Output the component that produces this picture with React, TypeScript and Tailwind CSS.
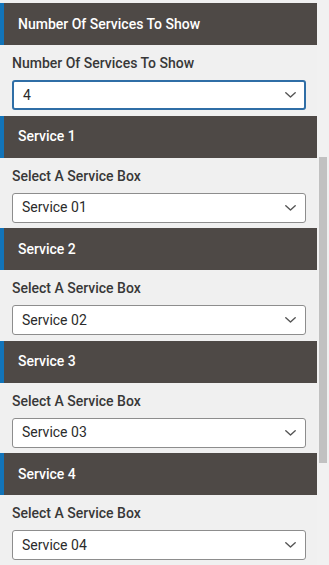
import React from 'react';

const Chevron = () => (
  <svg width="11" height="6" viewBox="0 0 11 6" fill="none" className="shrink-0">
    <path d="M0.8 0.8 L5.5 5 L10.2 0.8" stroke="#555" strokeWidth="1.4" strokeLinecap="round" strokeLinejoin="round" />
  </svg>
);

const SectionHeader = ({ title }: { title: string }) => (
  <div className="flex h-[42px] bg-[#4e4946]">
    <div className="w-1 bg-[#1274b9]" />
    <div className="flex items-center pl-[14px] text-[14px] font-medium text-white">{title}</div>
  </div>
);

const SelectBox = ({ value, focused }: { value: string; focused?: boolean }) => (
  <div
    className={
      focused
        ? 'flex h-[30px] items-center justify-between rounded-[3px] border-2 border-[#2f6ea6] bg-white pl-[9px] pr-[8px] text-[14px] text-[#2b2b2b]'
        : 'flex h-[30px] items-center justify-between rounded-[3px] border border-[#8d8d8d] bg-white pl-[9px] pr-[9px] text-[14px] text-[#2b2b2b]'
    }
  >
    <span>{value}</span>
    <Chevron />
  </div>
);

const Field = ({ label, value, focused }: { label: string; value: string; focused?: boolean }) => (
  <div className="pl-3 pr-[11px] pt-[10px] pb-[5.5px]">
    <div className="mb-[8px] h-[17px] text-[14px] font-medium leading-[17px] text-[#383838]">{label}</div>
    <SelectBox value={value} focused={focused} />
  </div>
);

const services = [
  { title: 'Service 1', value: 'Service 01' },
  { title: 'Service 2', value: 'Service 02' },
  { title: 'Service 3', value: 'Service 03' },
  { title: 'Service 4', value: 'Service 04' },
];

export default function App() {
  return (
    <div className="flex h-[565px] w-[329px] overflow-hidden bg-[#f0f0f0]" style={{ fontFamily: 'Roboto, "Liberation Sans", sans-serif' }}>
      <div className="w-[317px] shrink-0 pt-[3px]">
        <SectionHeader title="Number Of Services To Show" />
        <Field label="Number Of Services To Show" value="4" focused />
        {services.map((s) => (
          <div key={s.title}>
            <SectionHeader title={s.title} />
            <Field label="Select A Service Box" value={s.value} />
          </div>
        ))}
      </div>
      <div className="flex-1 bg-[#f1f1f1] pl-[2px] pr-[2px] pt-[157px]">
        <div className="h-[306px] w-[8px] bg-[#c1c1c1]" />
      </div>
    </div>
  );
}
